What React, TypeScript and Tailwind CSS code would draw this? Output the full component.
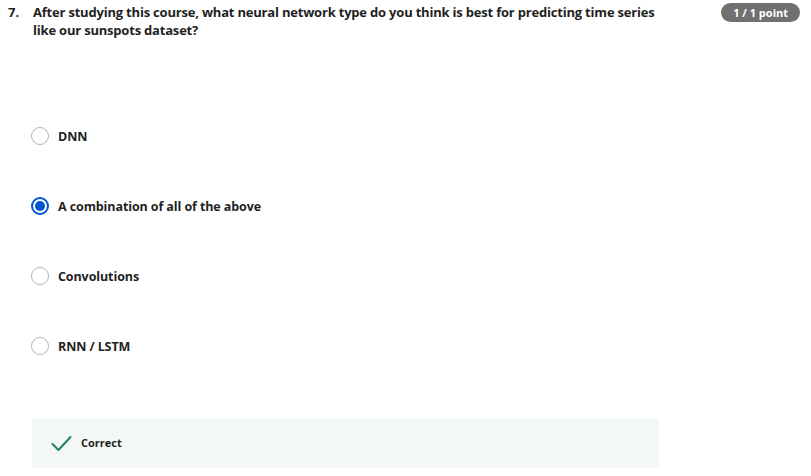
import React from 'react';

const options = [
  { label: 'DNN', selected: false },
  { label: 'A combination of all of the above', selected: true },
  { label: 'Convolutions', selected: false },
  { label: 'RNN / LSTM', selected: false },
];

const Radio = ({ selected }: { selected: boolean }) =>
  selected ? (
    <span className="flex h-[18px] w-[18px] shrink-0 items-center justify-center rounded-full border-2 border-[#0056d2] bg-white">
      <span className="h-[10px] w-[10px] rounded-full bg-[#0056d2]" />
    </span>
  ) : (
    <span className="h-[18px] w-[18px] shrink-0 rounded-full border-[1.5px] border-[#b4b4b4] bg-white" />
  );

export default function App() {
  return (
    <div className="h-[476px] w-[811px] bg-white text-[#1f1f1f]" style={{ fontFamily: '"Open Sans", Arial, sans-serif' }}>
      {/* Question header */}
      <div className="flex items-start pl-[8px] pr-[11px] pt-[3px]">
        <div className="w-[25px] shrink-0 text-[13px] font-bold leading-[18px]">7.</div>
        <div className="w-[640px] text-[13px] font-bold leading-[18px] tracking-[-0.2px]">
          After studying this course, what neural network type do you think is best for predicting time series like our sunspots dataset?
        </div>
        <div className="ml-auto rounded-full bg-[#707070] px-[12px] py-[2px] text-[11px] font-bold leading-[15px] text-white">
          1 / 1 point
        </div>
      </div>

      {/* Options */}
      <div className="mt-[88px] flex flex-col gap-[52px] pl-[31px]">
        {options.map((o) => (
          <label key={o.label} className="flex h-[18px] items-center gap-[9px]">
            <Radio selected={o.selected} />
            <span className="text-[12.5px] font-bold leading-[17px] tracking-[-0.1px]">{o.label}</span>
          </label>
        ))}
      </div>

      {/* Feedback */}
      <div className="ml-[32px] mt-[63px] flex h-[50px] w-[627px] items-center bg-[#f3f8f7] pl-[19px]">
        <svg width="21" height="17" viewBox="0 0 21 17" fill="none">
          <path d="M1.5 9 L7.5 15 L19.5 2" stroke="#1f8354" strokeWidth="2" strokeLinecap="round" strokeLinejoin="round" />
        </svg>
        <span className="ml-[9px] text-[11px] font-bold text-[#1f1f1f]">Correct</span>
      </div>
    </div>
  );
}
